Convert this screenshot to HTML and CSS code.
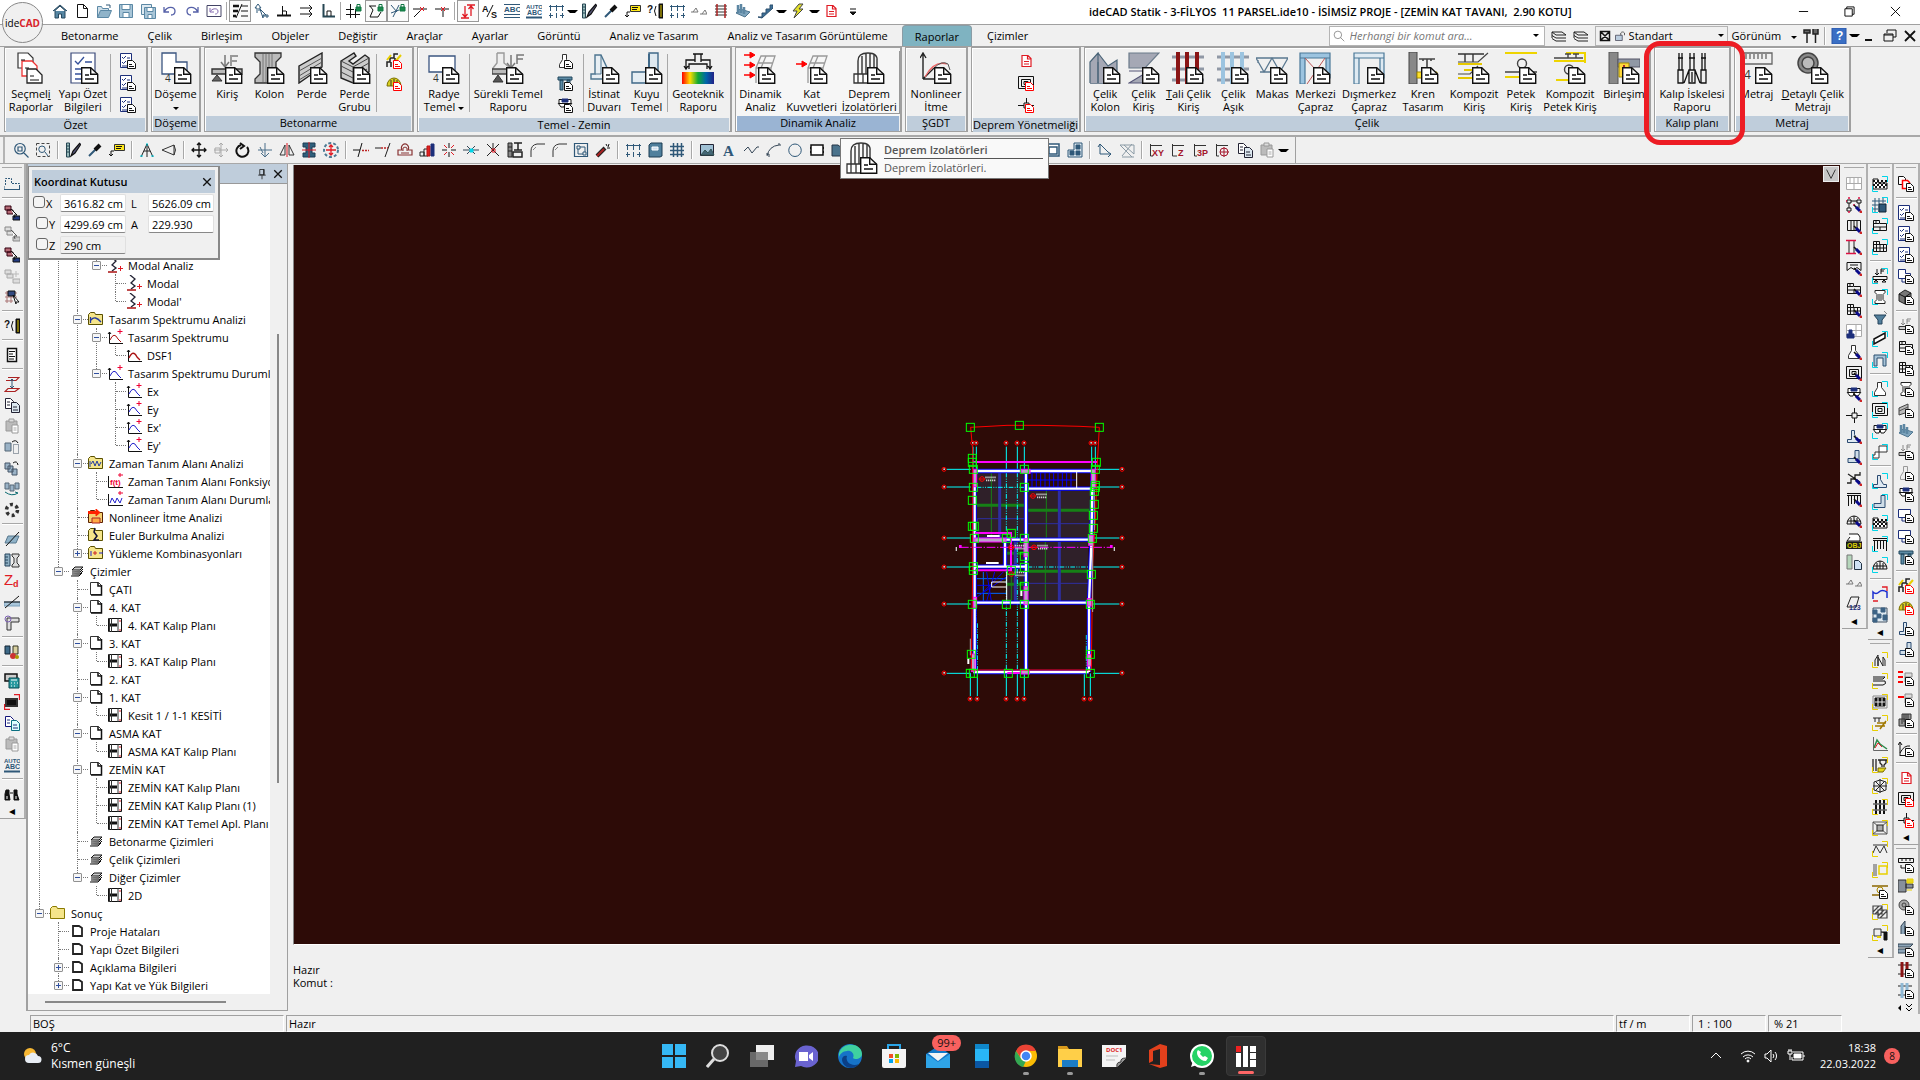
FILE: index.html
```
<!DOCTYPE html>
<html lang="tr">
<head>
  <meta charset="UTF-8">
  <title>ideCAD Statik</title>
  <link rel="stylesheet" href="styles.css">
</head>
<body>

  <header class="titlebar">
    <div class="quick" data-tools="home new open save saveall undo redo undobox | list* cursor perp arrows corner | gridlock polylock* xlock* node node2 | redit* as abc autoabc dim v brush pip note qruler dim level rebar bldg stairs v bolt v rdoc1 ovf"></div>
    <h1>ideCAD Statik - 3-FİLYOS&nbsp; 11 PARSEL.ide10 - İSİMSİZ PROJE - [ZEMİN KAT TAVANI,&nbsp; 2.90 KOTU]</h1>
    <div class="window-buttons">
      <button aria-label="Simge durumu"><svg viewBox="0 0 12 12"><path d="M1 6h10"/></svg></button>
      <button aria-label="Önceki boyut"><svg viewBox="0 0 12 12"><path d="M1 3h8v8H1zM3 3V1h8v8H9"/></svg></button>
      <button aria-label="Kapat"><svg viewBox="0 0 12 12"><path d="m1 1 10 10M11 1 1 11"/></svg></button>
    </div>
  </header>

  <nav class="menubar">
    <button class="logo">ide<b>CAD</b></button>
    <div class="tabs">
      <button>Betonarme</button>
      <button>Çelik</button>
      <button>Birleşim</button>
      <button>Objeler</button>
      <button>Değiştir</button>
      <button>Araçlar</button>
      <button>Ayarlar</button>
      <button>Görüntü</button>
      <button>Analiz ve Tasarım</button>
      <button>Analiz ve Tasarım Görüntüleme</button>
      <button class="active">Raporlar</button>
      <button>Çizimler</button>
    </div>
    <label class="search">
      <svg data-icon="search"></svg>
      <input type="text" placeholder="Herhangi bir komut ara..." aria-label="Komut ara">
      <span class="caret"></span>
    </label>
    <div class="menu-tools" data-tools="layers layers"></div>
    <div class="style-pick">
      <svg data-icon="xbox"></svg><svg data-icon="lock"></svg>
      <select aria-label="Stil"><option>Standart</option></select>
      <span class="caret"></span>
    </div>
    <button class="view">Görünüm <span class="caret"></span></button>
    <div class="menu-tools end" data-tools="hammer | help v min rest close"></div>
  </nav>

  <section class="ribbon">
    <div class="group g-ozet">
      <div class="items">
        <button><svg data-big="select"></svg>Seçmel<u>i</u><br>Raporlar</button>
        <button><svg data-big="check+doc"></svg>Yapı Özet<br>Bilgileri</button>
        <div class="stack line" data-tools="chk+doc chk+doc chk+doc"></div>
      </div>
      <h2>Özet</h2>
    </div>
    <div class="group g-doseme">
      <div class="items">
        <button><svg data-big="slab+doc"></svg>Döşeme<br><span class="caret"></span></button>
      </div>
      <h2>Döşeme</h2>
    </div>
    <div class="group g-beton">
      <div class="items">
        <button><svg data-big="beam+doc"></svg>Kiriş</button>
        <button><svg data-big="column+doc"></svg>Kolon</button>
        <button><svg data-big="wall+doc"></svg>Perde</button>
        <button><svg data-big="walls+doc"></svg>Perde<br>Grubu</button>
        <div class="stack line" data-tools="stair2+rdoc dome+rdoc"></div>
      </div>
      <h2>Betonarme</h2>
    </div>
    <div class="group g-temel">
      <div class="items">
        <button><svg data-big="raft+doc"></svg>Radye<br>Temel <span class="caret"></span></button>
        <button class="line"><svg data-big="strip+doc"></svg>Sürekli Temel<br>Raporu</button>
        <div class="stack" data-tools="foot+doc pile+doc cap+doc"></div>
        <button class="line"><svg data-big="retain+doc"></svg>İstinat<br>Duvarı</button>
        <button><svg data-big="well+doc"></svg>Kuyu<br>Temel</button>
        <button class="line"><svg data-big="geo"></svg>Geoteknik<br>Raporu</button>
      </div>
      <h2>Temel - Zemin</h2>
    </div>
    <div class="group g-dinamik hot">
      <div class="items">
        <button><svg data-big="dyn+doc"></svg>Dinamik<br>Analiz</button>
        <button><svg data-big="floor+doc"></svg>Kat<br>Kuvvetleri</button>
        <button class="hover"><svg data-big="iso+doc"></svg>Deprem<br>İzolatörleri</button>
      </div>
      <h2>Dinamik Analiz</h2>
    </div>
    <div class="group g-sgdt">
      <div class="items">
        <button><svg data-big="push+doc"></svg>Nonlineer<br>İtme</button>
      </div>
      <h2>ŞGDT</h2>
    </div>
    <div class="group g-deprem">
      <div class="items">
        <div class="stack" data-tools="rdoc1 target+rdoc cross+rdoc"></div>
      </div>
      <h2>Deprem Yönetmeliği</h2>
    </div>
    <div class="group g-celik">
      <div class="items">
        <button><svg data-big="scol+doc"></svg>Çelik<br>Kolon</button>
        <button><svg data-big="sbeam+doc"></svg>Çelik<br>Kiriş</button>
        <button><svg data-big="tali+doc"></svg><u>T</u>ali Çelik<br>Kiriş</button>
        <button><svg data-big="asik+doc"></svg>Çelik<br>Aşık</button>
        <button><svg data-big="truss+doc"></svg>Makas</button>
        <button><svg data-big="brace+doc"></svg>Merkezi<br>Çapraz</button>
        <button><svg data-big="ebrace+doc"></svg>Dışmerkez<br>Çapraz</button>
        <button><svg data-big="crane+doc"></svg>Kren<br>Tasarım</button>
        <button><svg data-big="comp+doc"></svg>Kompozit<br>Kiriş</button>
        <button><svg data-big="comb+doc"></svg>Petek<br>Kiriş</button>
        <button><svg data-big="ccomb+doc"></svg>Kompozit<br>Petek Kiriş</button>
        <button><svg data-big="joint+doc"></svg>Birleşim</button>
      </div>
      <h2>Çelik</h2>
    </div>
    <div class="group g-kalip">
      <div class="items">
        <button><svg data-big="props"></svg>Kalıp İskelesi<br>Raporu</button>
      </div>
      <h2>Kalıp planı</h2>
      <div class="highlight"></div>
    </div>
    <div class="group g-metraj">
      <div class="items">
        <button><svg data-big="meter+doc"></svg>Metraj</button>
        <button><svg data-big="nut+doc"></svg><u>D</u>etaylı Çelik<br>Metrajı</button>
      </div>
      <h2>Metraj</h2>
    </div>
  </section>

  <div class="toolrow">
    <div class="tools" data-tools="zoom marquee | brush pip note | compass eye | move moveg rotate mirrorv mirror colred snowred | trim extend offset bars explode xcyan xstar fillet2 fillet fillet frame spray | dim book grid | pic ta poly arc circle cloud pgon pgon frame grid | win grid pic | frame win win win2 | axis hatch | xy zz p3 cir copy paste v"></div>
    <div class="tooltip">
      <svg data-big="iso+doc"></svg>
      <div>
        <strong>Deprem Izolatörleri</strong>
        <p>Deprem İzolatörleri.</p>
      </div>
    </div>
  </div>

  <main>
    <div class="side left" data-tools="lshape | sel1 sel2 sel1 selg sel3 | qruler | doct | hred copy paste dupe dupe2 dupe3 ring | slabc cols zd cutl corn | balls | calc redbox copyb paste autoabc | binoc <"></div>

    <aside class="panel">
      <div class="panel-head">
        <button aria-label="Sabitle"><svg data-icon="pin"></svg></button>
        <button aria-label="Kapat"><svg data-icon="close"></svg></button>
      </div>
      <div class="panel-body">
        <div class="tree" id="tree"></div>
        <div class="vbar"><span></span></div>
        <div class="hbar"><span></span></div>
      </div>

      <form class="coords">
        <div class="coords-head">Koordinat Kutusu <button type="button" aria-label="Kapat"><svg data-icon="close"></svg></button></div>
        <div class="coords-grid">
          <label><input type="checkbox">X</label><input type="text" value="3616.82 cm" aria-label="X"><label for="len">L</label><input type="text" id="len" value="5626.09 cm">
          <label><input type="checkbox">Y</label><input type="text" value="4299.69 cm" aria-label="Y"><label for="ang">A</label><input type="text" id="ang" value="229.930">
          <label><input type="checkbox">Z</label><input type="text" class="off" value="290 cm" aria-label="Z">
        </div>
      </form>
    </aside>

    <div class="work">
      <div class="canvas">
        <button class="canvas-menu" aria-label="Görünüm menüsü"><svg viewBox="0 0 16 16"><path d="m3 3 5 10 5-10"/></svg></button>
        <svg class="plan" id="plan" viewBox="0 0 690 900"></svg>
      </div>
      <div class="console">Hazır<br>Komut :</div>
    </div>

    <div class="side a" data-tools="gridw nodes+br fr+br cold+br span+br brick+br tile+br gridb foot+br target+br cap+br cross ret+br ell+br zig+br comb+br dome2+br obj wallp level para <"></div>
    <div class="side b">
      <div class="block" data-tools="chess+cb gridc+cb brick+cb tile+cb | beams+cb isec+cb cone plank+cb pile2+cb | foot+cb target+cb cap+cb step+cb | ret+cb ell+cb chess+cb comb+cb dome2+cb | curve chessb <"></div>
      <div class="block" data-tools="peaks+yb rail+yb winb+yb comps+yb spec ibeam+yb web+yb bars3+yb gusset+yb zigz+yb ysq+yb hole+doc hatch2+yb gun+yb <"></div>
    </div>
    <div class="side c">
      <div class="block" data-tools="rcopy | chk+doc chk+doc chk+doc slabs+doc cube+doc | beamg+doc brick+doc tile+doc isec+doc wallg+doc bldg beamg+doc footg+doc cap+doc rafts+doc rafts+doc pile+doc | stair2+rdoc dome+rdoc ret+doc ell+doc | dyns+doc flr+doc isos+doc | axes+doc | rdoc1 target+rdoc cross+rdoc <"></div>
      <div class="block last" data-tools="rule+doc joint2 nuts+doc peakb+doc sbm+doc redbars+doc blubars+doc"></div>
      <button class="more" aria-label="Daha fazla"><svg viewBox="0 0 20 12"><path d="M5 3v6L2 6z" fill="#000"/><path d="m10 2 3 3 3-3M10 6l3 3 3-3" fill="none" stroke="#000"/></svg></button>
    </div>
  </main>

  <footer class="status">
    <span class="s-floor">BOŞ</span>
    <span class="s-msg">Hazır</span>
    <span>tf / m</span>
    <span class="pad">1 : 100</span>
    <span class="pad">% 21</span>
  </footer>

  <footer class="taskbar">
    <div class="weather">
      <svg viewBox="0 0 24 24"><circle cx="10" cy="10" r="6" fill="#f7b733"/><path d="M9 19a4 4 0 0 1 0-8 5 5 0 0 1 9 1 3.500 3.500 0 0 1 0 7z" fill="#e8edf4"/></svg>
      <p>6°C<br>Kısmen güneşli</p>
    </div>
    <div class="apps" id="apps"></div>
    <div class="tray">
      <svg viewBox="0 0 20 20"><path d="m5 12 5-5 5 5"/></svg>
      <svg viewBox="0 0 20 20"><path d="M3 8a10 10 0 0 1 14 0M5 11a7 7 0 0 1 10 0M7 13a4 4 0 0 1 6 0" /><circle cx="10" cy="15" r="1" fill="#fff"/></svg>
      <svg viewBox="0 0 20 20"><path d="M3 8h2l4-4v12l-4-4H3zM11 8a3 3 0 0 1 0 4M13 6a6 6 0 0 1 0 8"/></svg>
      <svg viewBox="0 0 20 20"><path d="M7 6h10v8H6v-3M18 9v2M2 5h4v3H2zM3 3v2M5 3v2M4 8v6"/><path d="M8 8h7v4H8z" fill="#fff"/></svg>
      <time>18:38<br>22.03.2022</time>
      <span class="count">8</span>
    </div>
  </footer>

  <script src="app.js"></script>
</body>
</html>
```
FILE: styles.css
```
* {
  box-sizing: border-box;
}
body {
  margin: 0;
  height: 100vh;
  display: flex;
  flex-direction: column;
  overflow: hidden;
  font-family: "Open Sans", "Noto Sans", sans-serif;
  font-size: 10px;
  color: #000;
  background: #f0f0f0;
}
button {
  border: 0;
  padding: 0;
  background: none;
  font: inherit;
  color: inherit;
}
svg {
  display: block;
  flex: none;
}
h1, h2, p {
  margin: 0;
}
.caret {
  display: inline-block;
  border: 3px solid transparent;
  border-top-color: #000;
  border-bottom: 0;
  vertical-align: middle;
}

/* toolbars */
.tool {
  width: 22px;
  height: 22px;
  display: grid;
  place-items: center;
  flex: none;
}
.tool svg {
  width: 16px;
  height: 16px;
}
.tool.boxed {
  border: 1px solid #999;
  background: #fafafa;
}
.drop {
  width: 11px;
  text-align: center;
  flex: none;
}
.drop .caret {
  display: block;
  margin: 0 auto;
}
.sep {
  width: 2px;
  height: 18px;
  margin: 0 3px;
  background: #a8a8a8;
  border-right: 1px solid #fff;
  flex: none;
}

/* title */
.titlebar {
  height: 25px;
  flex: none;
  display: flex;
  align-items: center;
  background: #fff;
  border-bottom: 1px solid #a0a0a0;
  padding: 0 2px 2px 49px;
}
.quick, .menu-tools, .tools {
  display: flex;
  align-items: center;
}
.quick .sep {
  margin: 0 1px;
}
.titlebar h1 {
  flex: 1;
  margin-left: 225px;
  font-size: 11px;
  font-weight: 600;
  white-space: nowrap;
}
.window-buttons {
  display: flex;
}
.window-buttons button {
  width: 46px;
  display: grid;
  place-items: center;
}
.window-buttons svg {
  width: 11px;
  height: 11px;
  fill: none;
  stroke: #000;
}

/* menu */
.menubar {
  height: 21px;
  flex: none;
  display: flex;
  align-items: center;
  position: relative;
  padding-left: 46px;
}
.logo {
  position: absolute;
  left: 2px;
  top: -23px;
  width: 41px;
  height: 41px;
  border: 1px solid #888;
  border-radius: 50%;
  background: #f0f0f0;
  font-size: 10px;
  z-index: 2;
}
.logo b {
  color: #d8232a;
}
.tabs {
  display: flex;
  height: 100%;
  flex: 1;
}
.tabs button {
  padding: 0 14px 0 15px;
  font-size: 11px;
  white-space: nowrap;
}
.tabs .active {
  background: #7fb3c1;
  border: 1px solid #8a9ca5;
  border-bottom: 0;
  border-radius: 4px 4px 0 0;
  padding: 0 12px;
}
.search {
  display: flex;
  align-items: center;
  width: 216px;
  height: 20px;
  padding: 0 5px 0 3px;
  background: #fff;
  border: 1px solid #b4b4b4;
}
.search svg, .style-pick svg {
  width: 12px;
  height: 12px;
  margin-right: 3px;
}
.search input {
  flex: 1;
  border: 0;
  outline: 0;
  font: italic 11px "Open Sans", sans-serif;
}
.search input::placeholder {
  color: #777;
}
.menu-tools {
  padding: 0 3px;
}
.style-pick {
  display: flex;
  align-items: center;
  width: 133px;
  height: 20px;
  padding: 0 3px;
  border: 1px solid #b4b4b4;
}
.style-pick select {
  flex: 1;
  appearance: none;
  border: 0;
  background: none;
  font: 11px "Open Sans", sans-serif;
}
.view {
  font-size: 11px;
  padding: 0 4px;
}
.view .caret {
  margin-left: 7px;
}
.menu-tools.end {
  padding: 0;
}
.menu-tools.end .tool {
  width: 20px;
}

/* ribbon */
.ribbon {
  display: flex;
  flex: none;
  height: 91px;
  gap: 3px;
  padding: 0 0 3px 4px;
  border-top: 1px solid #a0a0a0;
  border-bottom: 2px solid #a8a8a8;
}
.group {
  display: flex;
  flex-direction: column;
  position: relative;
  flex: none;
  border: 1px solid #a0a0a0;
  border-right-width: 2px;
  box-shadow: inset 1px 1px #fff;
}
.group h2 {
  height: 15px;
  margin: 0 1px;
  background: #bfcddb;
  font-size: 11px;
  line-height: 14px;
  font-weight: normal;
  text-align: center;
  white-space: nowrap;
}
.group.hot h2 {
  background: #9ab4d3;
}
.group.hot .items {
  background: #f6f6f6;
}
.items {
  flex: 1;
  display: flex;
  padding: 2px 1px;
}
.items > button {
  flex: 1 1 auto;
  display: block;
  padding-top: 2px;
  font-size: 11px;
  line-height: 13px;
  text-align: center;
  white-space: nowrap;
  align-self: flex-start;
}
.items > button svg {
  width: 32px;
  height: 32px;
  margin: 0 auto 3px;
}
.items > .hover {
  box-shadow: 1px 1px #999;
}
.line {
  position: relative;
}
.line::before {
  content: "";
  position: absolute;
  left: 0;
  top: 4px;
  height: 58px;
  border-left: 1px solid #a8a8a8;
}
.stack {
  display: flex;
  flex-direction: column;
  align-items: center;
  width: 35px;
  flex: none;
}
.g-deprem .stack {
  flex: 1;
}
.g-ozet { width: 144px; }
.g-doseme { width: 50px; }
.g-beton { width: 210px; }
.g-temel { width: 315px; }
.g-dinamik { width: 167px; }
.g-sgdt { width: 63px; }
.g-deprem { width: 110px; }
.g-celik { width: 567px; }
.g-kalip { width: 77px; }
.g-metraj { width: 117px; }
.highlight {
  position: absolute;
  left: -11px;
  top: -7px;
  width: 101px;
  height: 104px;
  border: 5px solid #ed1c24;
  border-radius: 16px;
  z-index: 3;
}

/* second toolbar */
.toolrow {
  height: 27px;
  flex: none;
  position: relative;
  border-bottom: 1px solid #a8a8a8;
}
.tools {
  display: inline-flex;
  height: 26px;
  margin-left: 3px;
  padding: 0 6px 0 5px;
  border-left: 2px solid #b4b4b4;
  border-right: 1px solid #a0a0a0;
}
.tooltip {
  position: absolute;
  left: 840px;
  top: 1px;
  width: 209px;
  height: 41px;
  display: flex;
  gap: 6px;
  padding: 3px 5px;
  background: #f9f9f9;
  border: 1px solid #777;
  z-index: 5;
  font-size: 11px;
  line-height: 15px;
  color: #555;
}
.tooltip svg {
  width: 32px;
  height: 32px;
}
.tooltip div {
  flex: 1;
}
.tooltip strong {
  display: block;
  height: 17px;
  font-weight: 600;
  border-bottom: 1px solid #555;
}
.tooltip p {
  padding-top: 1px;
}

/* main area */
main {
  flex: 1;
  display: flex;
  min-height: 0;
}
.side {
  width: 26px;
  flex: none;
  align-self: flex-start;
}
.side.left, .side.a, .block {
  display: flex;
  flex-direction: column;
  align-items: center;
  padding-top: 9px;
  border-right: 2px solid #b0b0b0;
  border-bottom: 1px solid #a0a0a0;
  background: linear-gradient(#a8a8a8, #a8a8a8) center 3px / 20px 1px no-repeat;
}
.side .tool {
  height: 21px;
}
.side .sep {
  width: 21px;
  height: 2px;
  margin: 3px 0;
  border-right: 0;
  border-bottom: 1px solid #fff;
}
.side .drop {
  height: 14px;
  line-height: 12px;
  font-size: 12px;
}
.side.c {
  align-self: stretch;
  display: flex;
  flex-direction: column;
}
.block.last {
  border-bottom: 0;
  flex: 1;
}
.more {
  height: 18px;
  padding-left: 2px;
  border-right: 2px solid #b0b0b0;
}
.more svg {
  width: 20px;
  height: 12px;
}

/* project tree */
.panel {
  position: relative;
  width: 262px;
  flex: none;
  display: flex;
  flex-direction: column;
  border: 1px solid #a0a0a0;
  border-width: 0 1px 1px 2px;
  margin-bottom: 3px;
}
.panel-head {
  display: flex;
  justify-content: flex-end;
  align-items: center;
  gap: 4px;
  height: 20px;
  padding-right: 3px;
  background: #bfcddb;
  border-bottom: 1px solid #999;
}
.panel-head svg, .coords-head svg {
  width: 12px;
  height: 12px;
}
.panel-body {
  flex: 1;
  min-height: 0;
  display: grid;
  grid-template: minmax(0, 1fr) 16px / minmax(0, 1fr) 17px;
}
.tree {
  overflow: hidden;
  background: #fff;
  font-size: 11px;
}
.tree ul {
  list-style: none;
  margin: 0;
  padding: 0 0 0 19px;
}
.tree > ul {
  padding: 72px 0 0 2px;
}
.tree li {
  position: relative;
}
.tree li::before {
  content: "";
  position: absolute;
  left: 9px;
  top: 0;
  bottom: 0;
  border-left: 1px dotted #777;
}
.tree li:last-child::before {
  bottom: auto;
  height: 9px;
}
.row {
  position: relative;
  display: flex;
  align-items: center;
  height: 18px;
  padding-left: 20px;
  gap: 5px;
  white-space: nowrap;
}
.row::before {
  content: "";
  position: absolute;
  left: 10px;
  top: 9px;
  width: 10px;
  border-top: 1px dotted #777;
}
.row svg {
  width: 16px;
  height: 16px;
}
.twist {
  position: absolute;
  left: 5px;
  top: 5px;
  width: 9px;
  height: 9px;
  border: 1px solid #919191;
  border-radius: 1px;
  background: linear-gradient(#2f4f9f, #2f4f9f) center / 5px 1px no-repeat #f6f6f6;
}
.twist.plus {
  background: linear-gradient(#2f4f9f, #2f4f9f) center / 5px 1px no-repeat, linear-gradient(#2f4f9f, #2f4f9f) center / 1px 5px no-repeat #f6f6f6;
}
.vbar span {
  display: block;
  width: 2px;
  height: 449px;
  margin: 150px 0 0 7px;
  background: #888;
}
.hbar span {
  display: block;
  width: 181px;
  height: 2px;
  margin: 7px 0 0 17px;
  background: #888;
}

/* coordinate box */
.coords {
  position: absolute;
  left: 0;
  top: 2px;
  width: 192px;
  height: 94px;
  padding: 3px;
  background: #f0f0f0;
  border: 1px solid #888;
  border-width: 1px 2px 2px 1px;
  z-index: 2;
}
.coords-head {
  display: flex;
  justify-content: space-between;
  align-items: center;
  height: 23px;
  padding: 0 2px;
  background: #bfcddb;
  font-size: 11px;
  font-weight: 600;
}
.coords-grid {
  display: grid;
  grid-template-columns: 25px 66px 18px 66px;
  gap: 3px 2px;
  padding: 1px 0 0 1px;
  align-items: center;
  font-size: 11px;
}
.coords-grid label {
  display: flex;
  align-items: center;
}
.coords-grid input[type="text"] {
  width: 100%;
  height: 18px;
  padding: 0 0 0 3px;
  border: 1px solid #e0e0e0;
  border-bottom-color: #888;
  border-radius: 2px;
  font: 11px "Open Sans", sans-serif;
}
.coords-grid .off {
  background: #f0f0f0;
}
.coords-grid input[type="checkbox"] {
  appearance: none;
  width: 12px;
  height: 12px;
  margin: 0 1px 3px 0;
  border: 1px solid #666;
  border-radius: 3px;
  background: #f4f4f4;
}
.coords-grid input + label {
  padding-left: 3px;
}

/* drawing area */
.work {
  flex: 1;
  min-width: 0;
  display: flex;
  flex-direction: column;
  padding: 0 2px 0 5px;
}
.canvas {
  flex: 1;
  position: relative;
  margin-top: 1px;
  background: #2d0b07;
  border-left: 1px solid #888;
  border-bottom: 1px solid #fff;
}
.canvas-menu {
  position: absolute;
  right: 1px;
  top: 1px;
  width: 16px;
  height: 16px;
  background: #c8c8c8;
  border: 1px solid #eee;
}
.canvas-menu svg {
  width: 14px;
  height: 14px;
  fill: none;
  stroke: #222;
}
.plan {
  position: absolute;
  left: 626px;
  top: 245px;
  width: 230px;
  height: 300px;
}
.console {
  height: 69px;
  padding-top: 18px;
  font-size: 11px;
  line-height: 13px;
}

/* status */
.status {
  display: flex;
  gap: 2px;
  height: 18px;
  flex: none;
  padding: 1px 78px 0 30px;
  font-size: 11px;
  line-height: 15px;
}
.status span {
  width: 74px;
  border: 1px solid #a0a0a0;
  border-right-color: #fff;
  border-bottom-color: #fff;
  padding-left: 2px;
}
.status .s-floor {
  width: 254px;
}
.status .s-msg {
  flex: 1;
}
.status .pad {
  padding-left: 5px;
}

/* windows taskbar */
.taskbar {
  display: grid;
  grid-template-columns: 1fr auto 1fr;
  align-items: center;
  height: 48px;
  flex: none;
  background: #202020;
  color: #fff;
  font-size: 12px;
  line-height: 16px;
}
.weather {
  display: flex;
  align-items: center;
  gap: 7px;
  padding-left: 20px;
}
.weather svg {
  width: 24px;
  height: 24px;
}
.tray time {
  font-size: 11px;
}
.apps {
  display: flex;
  gap: 4px;
}
.app {
  position: relative;
  width: 40px;
  height: 40px;
  display: grid;
  place-items: center;
  border-radius: 4px;
}
.app svg {
  width: 24px;
  height: 24px;
}
.app.open::after {
  content: "";
  position: absolute;
  left: 17px;
  bottom: 1px;
  width: 6px;
  height: 3px;
  border-radius: 2px;
  background: #999;
}
.app.current {
  background: #2f2f2f;
  border: 1px solid #3a3a3a;
}
.app.current::after {
  left: 11px;
  width: 16px;
  background: #f66;
}
.badge {
  position: absolute;
  right: -3px;
  top: -1px;
  padding: 0 5px;
  border-radius: 8px;
  background: #f8615f;
  color: #111;
  font-size: 11px;
  line-height: 16px;
}
.tray {
  display: flex;
  justify-content: flex-end;
  align-items: center;
  gap: 4px;
  padding-right: 20px;
}
.tray svg {
  width: 20px;
  height: 20px;
  fill: none;
  stroke: #fff;
}
.tray svg:first-child {
  margin-right: 8px;
}
.tray time {
  margin-left: 10px;
  text-align: right;
}
.tray .count {
  width: 16px;
  height: 16px;
  margin-left: 4px;
  border-radius: 50%;
  background: #f8615f;
  color: #111;
  font-size: 10px;
  line-height: 16px;
  text-align: center;
}
```
FILE: app.js
```
const p = (d, s = "#111", f = "none", w = 1) => `<path d="${d}" stroke="${s}" fill="${f}" stroke-width="${w}"/>`;
const t = (x, y, size, text, fill = "#111") => `<text x="${x}" y="${y}" font-size="${size}" font-weight="bold" font-family="Liberation Sans" fill="${fill}">${text}</text>`;

const navy = "#1c2f7a", steel = "#2f5878", gray = "#888", red = "#e01b24", cyan = "#00d5e8", gold = "#e8cf00";

// 16px icons, joined with + to lay one over the other
const small = {
  doc: p("M7.500 7.500h5l3 3v5h-8z", "#111", "#fff") + p("M9 11.500h3M9 13.500h5"),
  rdoc: p("M7.500 7.500h5l3 3v5h-8z", "#f00", "#fff") + p("M9 11.500h3M9 13.500h5", "#f00"),
  br: p("M8 8l3 3", "#111", "none", 1.500) + p("M10 10l4 4", "#0a0a8a", "none", 3) + p("M14 14l2 2", "#c22", "none", 2.500),
  cb: p("M10 .500h5.500V6M.500 10v5.500H6", cyan),
  yb: p("M10 .500h5.500V6M.500 10v5.500H6", gold),
  home: p("M1 8l7-6 7 6M3 7.500V15h3.500v-4h3v4H13V7.500L8 3z", "#27485f", "#5686a3"),
  new: p("M3.500 1.500h6l4 4v9h-10zM9.500 1.500v4h4", "#111", "#fff"),
  open: p("M1.500 14.500v-11h4l1 2h6v2", "#5b88a5", "#cfdfe9") + p("M1.500 14.500l3-7h11l-3 7z", "#5b88a5", "#8fb3c9") + p("M10 2h4v3", steel),
  save: p("M1.500 1.500h13v13h-13z", "#5b88a5", "#a9c6d8") + p("M4 1.500h8v5H4zM5 9.500h6v5H5z", "#5b88a5", "#fff"),
  saveall: p("M1.500 1.500h10v10h-10z", "#5b88a5", "#dfeaf1") + p("M4.500 4.500h11v11h-11z", "#5b88a5", "#a9c6d8") + p("M7 4.500h6v4H7zM8 11.500h4v4H8z", "#5b88a5", "#fff"),
  undo: p("M2 4v5h5M2.500 8.500C5 3 13 3 13 8c0 3-2 4-4 4", "#5560a8", "none", 1.300),
  redo: p("M14 4v5H9M13.500 8.500C11 3 3 3 3 8c0 3 2 4 4 4", "#5560a8", "none", 1.300),
  undobox: p("M1 2.500h14v11H1z", "#446", "#fff") + p("M4 5v4h4M4.500 8.500C6 5 12 5 12 8s-2 3-3 3", "#846ab0"),
  list: p("M1 3h6M1 8h5M1 13h3", "#111", "none", 2.500) + p("M9 3h7M9 8h7M9 13h7M4 15L10 1"),
  cursor: p("M4 1l-3 4h2v5M4 1l3 4H5v3M6 6l6 6-3 0 0 3z", steel) + p("M9 13h6M13 11v4", steel),
  perp: p("M1 12.500h14", "#111", "none", 2) + p("M6.500 3v9M10.500 8v4M6 8h4"),
  arrows: p("M2 5h12M2 11h12M11 2l3 3-3 3M11 8l3 3-3 3"),
  corner: p("M3.500 1v12.500H15", "#264653", "none", 2) + p("M7 13V8h4v5"),
  gridlock: p("M4.500 1v14M9.500 6v9M0 6.500h8M0 11.500h14") + p("M10 4h5v4h-5z", "#174", "#1a8a4a") + p("M11 4V1.500h3V4", "#174"),
  polylock: p("M1 3h7M2 3l3 4-3 7h8l3-5", "#111") + p("M10 4h5v4h-5z", "#174", "#1a8a4a") + p("M11 4V1.500h3V4", "#174"),
  xlock: p("M1 2l6 7M3 14l6-12M1 10l8-3", steel) + p("M10 4h5v4h-5z", "#174", "#1a8a4a") + p("M11 4V1.500h3V4", "#174"),
  node: p("M1 6h14M10 6L2 14") + p("M8 4l4 4M12 4L8 8", red),
  node2: p("M1 6h14M9 6v8") + p("M7 4l4 4M11 4L7 8", red),
  redit: p("M5 14V3M2.500 11L5 14l2.500-3M1 15h8M11 13V3M8.500 6l2.500-3 2.500 3M7 2h8", red, "none", 1.300),
  as: t(0, 9, 9, "A") + t(9, 15, 9, "S") + p("M11 2L5 14"),
  abc: t(0, 9, 8, "ABC", steel) + p("M0 11.500h16M0 14.500h16M0 1.500h16", steel),
  autoabc: t(0, 6, 6, "AUTO", steel) + t(1, 12, 7, "ABC", steel) + p("M0 14.500h16", steel, "none", 2),
  dim: p("M2.500 2v6M8.500 2v6M14.500 2v6M1 3.500h15M2.500 10v5M14.500 10v5M1 12.500h4M12 12.500h4M8.500 10v5", steel),
  brush: p("M1.500 1v14h3V1zM2 4h2M2 7h2M2 10h2", "#264653", "#9bb") + p("M15 1L8 9l-2 5 4-3 6-9", "#111", "#557", 1.200),
  pip: p("M2 14l7-7", steel, "none", 2) + p("M8 8l5-5", "#111", "none", 4),
  note: p("M5.500 2.500h10v6h-10z", "#333", "#ffe81a") + p("M7 4.500h6M7 6.500h5M5 9H2v5M0 12l2 2 2-2"),
  qruler: t(0, 10, 10, "?") + p("M9 3q-3 5 0 10", "#111") + p("M12 1h4v14h-4z", "#111", "#111") + p("M14 2v12", gold, "none", 1),
  level: p("M0 9h7l-2-4-3 4M9 11h7l-2-4-3 4", "#777"),
  rebar: p("M2 3h12M2 6h12M2 9h12M2 12h12", "#333", "none", 1) + p("M4 1v12M12 1v14", "#a22", "none", 1.500),
  bldg: p("M1 10l4-4 10 3-5 5z", "#4d7590", "#7ea4bd") + p("M3 2v8M6 1v9M9 4v7", "#5d87a3", "none", 2.500),
  stairs: p("M1 14h4v-4h4V6h4V2h3v3l-11 10z", "#2b4f6e", "#3f7097"),
  bolt: p("M9 1L3 8h4l-3 7 9-9H9l4-5z", "#444", "#e3e02c"),
  rdoc1: p("M4 2.500h6l3 3v8H4zM9.500 2.500v3.500H13", red, "#fff", 1.200) + p("M6 8.500h5M6 11h5", red),
  ovf: p("M5 6h6") + p("M5 9h6l-3 3z", "#111", "#111"),
  search: p("M6.500 1.500a5 5 0 1 1 0 10 5 5 0 0 1 0-10M10 10l5 5", "#777"),
  layers: p("M1 4h10l4 3H5zM1 7.500L5 10h10M1 10.500L5 13h10M1 4v6", "#222"),
  xbox: p("M2 2h12v12H2zM3 3l10 10M13 3L3 13", "#111", "none", 2),
  lock: p("M2 7h9v7H2z", "#445", "#bcd") + p("M9 7V4a3 3 0 0 1 5 0v3", "#333"),
  hammer: p("M1 2h6v3H1zM4 5v10M10 1v5h5V1M12.500 6v9", "#222", "#666", 1.500),
  help: p("M1 0h14v16H1z", "#2a57a8", "#3a6fc4") + t(5, 12, 12, "?", "#fff"),
  min: p("M3 12h7", "#111", "none", 2),
  rest: p("M5 5V2h9v7h-3M2 6h9v7H2zM2 7h9"),
  close: p("M3 3l10 10M13 3L3 13", "#111", "none", 1.800),
  pin: p("M5 2h6v7H5zM3 9.500h10M8 10v5M10 2v7"),
  chk: p("M.500 .500h11v14H.500z", navy, "#fff") + p("M2 4l1.500 1.500L6 3M2 9l1.500 1.500L6 8M7 5h3M7 9h3M2 13h5", navy),
  stair2: p("M1 14V9h3V5h4V1h4M5 14V9M9 9V5", "#222", "none", 1.500) + p("M1 7l4-5M8 10l7-8", gold, "none", 2),
  dome: p("M1 11a7 8 0 0 1 14 0z", "#7a7000", "#d9cf20") + p("M5 11V5M8 11V4M11 11V5", "#333"),
  foot: p("M5.500 1.500h4v5l4 5v3h-11v-3l3-5z", "#333", "#fff"),
  footg: p("M5.500 1.500h4v5l4 5v3h-11v-3l3-5z", "#999", "#eee"),
  pile: p("M1 2h14v3H1zM3 5h3v10H3zM10 5h3v10h-3z", "#20465c", "#5d8ba5"),
  pile2: p("M2 14V3h12v11h-3V6H5v8z", "#2b4f6e", "#a8c4d8"),
  cap: p("M2 2.500h12v4H2zM1 6l3 4h3l1-3 1 3h3l3-4", "#111", "#fff") + p("M5 2h6v3H5z", navy, navy),
  target: p("M.500 1.500h15v12H.500zM3.500 4.500h9v7h-9zM6 6.500h4v3H6z", "#111"),
  cross: p("M0 8.500h16M8.500 1v15") + p("M6 6h5v5H6z", "#111", "#f0f0f0"),
  zoom: p("M7 1.500a5 5 0 1 1 0 10.500A5 5 0 0 1 7 1.500M10.500 10.500l5 5M5 5h4v4H5z", steel, "none", 1.200),
  marquee: `<path d="M1.500 1.500h13v13h-13z" fill="none" stroke="#444" stroke-dasharray="3 2"/>` + p("M7 4a3 3 0 1 1 0 6.500A3 3 0 0 1 7 4M10 10l3 4", steel),
  compass: p("M8 2L2 15M8 2l6 13M5 9h6M8 2v13", "#222") + p("M8 1v3M1 14h3M12 14h3", cyan),
  eye: p("M13 3L1 8l12 5V3M13 3q3 5 0 10", "#333"),
  move: p("M8 1v14M1 8h14M6 3l2-2 2 2M6 13l2 2 2-2M3 6L1 8l2 2M13 6l2 2-2 2", "#111", "none", 1.300),
  moveg: p("M8 1v14M1 8h14M6 3l2-2 2 2M6 13l2 2 2-2M13 6l2 2-2 2M2 6h5v5H2z", "#aaa"),
  rotate: p("M6 3a6 6 0 1 0 6 2M5 1l4 3-4 3", "#111", "none", 2),
  mirrorv: p("M8 1v14M4 11l4 4 4-4M1 8h14M3 5l3 6", "#4a6f8a"),
  mirror: p("M6 3v10H1zM10 3v10h5z", "#333") + p("M8 1v14", red),
  colred: p("M2 1h12v4h-3v6h3v4H2v-4h3V5H2z", "#1d3c52", "#2f5f7c") + p("M8 0v16M1 8h14", red),
  snowred: p("M8 3v10M3 8h10M6 5l2-2 2 2M6 11l2 2 2-2", red, "none", 1.300) + `<circle cx="8" cy="8" r="7" fill="none" stroke="#4d7a94" stroke-width="2" stroke-dasharray="3 2"/>`,
  trim: p("M9 1L5 15M0 8h7") + `<path d="M9 8.500h7" stroke="#b22" stroke-width="1.500" stroke-dasharray="2 1"/>`,
  extend: p("M15 1l-5 14M0 6h6", "#222") + `<path d="M6 6h7" stroke="#b22" stroke-width="1.500" stroke-dasharray="2 1"/>`,
  offset: p("M5 8a3.500 4 0 1 1 6 0h4v5H1V8z", "#833", "none", 1.200) + p("M4 11h8M6 9q-1-4 2-4t2 4", "#833"),
  bars: p("M1 14v-4h4v4zM5 14V7h4v7z", "#222", "#eee") + p("M8 14V4h3v10z", "#b11", "#d22") + p("M12 14V2h3v12z", navy, navy),
  explode: p("M8 1v5M8 10v5M1 8h5M10 8h5") + p("M3 3l3 3M13 3l-3 3M3 13l3-3M13 13l-3-3", red),
  xcyan: p("M0 8h16M4 4l3 3M12 4L9 7M4 12l3-3M12 12L9 9", "#345") + p("M7 7h3v3H7z", cyan, cyan),
  xstar: p("M2 2l12 12M14 2L2 14M8 1v6", "#222") + p("M7 7h3v3H7z", red),
  fillet2: p("M1 1h4v14H1zM1 5h4M1 9h4", "#222", "#888") + p("M7 1h8M7 8h8M11 1v7M6 10h9v5H6z", "#222", "none", 1.500),
  fillet: p("M2 15V9q0-6 6-7h8", "#333") + p("M4 8l3-3", gray),
  frame: p("M1.500 1.500h13v13h-13z", steel, "none", 1.200) + p("M4 4h3v3H4zM10 10h3v3h-3zM7 5h5v5M5 7v5h5", steel),
  spray: p("M2 14L10 6", "#222", "none", 4) + p("M2 14l7-7", "#a22", "none", 2) + p("M11 2l1 2M14 2l-1 3M15 6l-3 0"),
  book: p("M2 3l2-2h11v13l-2 1H2z", "#1d3c52", "#4f7f9c") + p("M5 5h6v3H5z", "#fff", "#cde"),
  grid: p("M4.500 1v14M8.500 1v14M12.500 1v14M1 4.500h14M1 8.500h14M1 12.500h14", steel, "none", 1.500),
  pic: p("M1.500 2.500h13v11h-13z", "#223", "#9fc0d4") + p("M2 13l4-5 3 3 3-4 3 6z", "#355", "#467"),
  ta: `<text x="2" y="14" font-size="15" font-weight="bold" font-family="Liberation Serif" fill="${steel}">A</text>`,
  poly: p("M1 9l4-4 4 6 5-6h2", "#345"),
  arc: p("M2 14Q4 4 14 3M1 12h3v3M13 2h2v2", "#345"),
  circle: p("M8 2a6 6 0 1 1 0 12.500A6 6 0 0 1 8 2", steel),
  cloud: p("M2 3h12v10H2z", "#111", "#fff", 1.500) + p("M1 6h1M1 10h1M14 6h1M14 10h1", "#111", "none", 2),
  pgon: p("M1 3h6l8 6-4 5H1z", "#234", "#4a728c"),
  win: p("M2 2h12v12H2zM4 5h8v7H4z", steel, "#fff", 1.500),
  win2: p("M7 1h8v14H1V8h6z", steel, "#dbe6ee") + p("M9 3h4v4H9zM3 9h4v4H3zM9 9h4v4H9z", steel, steel),
  axis: p("M3 12V2l-2 3M3 2l3 3M3 12h11l-3-2M14 12l-3 3M6 5l5 5", steel),
  hatch: p("M1 3h14v9M1 3l12 12M5 3l10 9M13 2L3 14M3 15h12", "#8a9aa5"),
  xy: p("M1.500 2v12H4M1 3.500h12", "#333") + t(3, 14, 9, "XY", "#a3142a"),
  zz: p("M1.500 2v12H6M1 3.500h12", "#333") + t(7, 14, 9, "Z", "#a3142a"),
  p3: p("M1.500 2v12H4M1 3.500h12", "#333") + t(4, 14, 9, "3P", "#a3142a"),
  cir: p("M1.500 2v12H4M1 3.500h12", "#333") + p("M9 6a4 4 0 1 1 0 8 4 4 0 0 1 0-8M9 5v10M5 10h9", "#a3142a"),
  copy: p("M1.500 1.500h5l3 3v7h-8z", "#223", "#fff") + p("M7.500 5.500h5l3 3v7h-8z", "#223", "#dce8f0") + p("M3 5h3M3 8h3M9 10h4M9 13h5", "#223"),
  copyb: p("M1.500 1.500h5l3 3v7h-8z", "#11137a", "#fff") + p("M7.500 5.500h5l3 3v7h-8z", "#0a6f80", "#dff") + p("M3 5h3M3 8h3M9 10h4M9 13h5", navy),
  rcopy: p("M.500 .500h5l2 2v6h-7z", "#111", "#fff") + p("M4.500 4.500h5l2 2v6h-7z", "#f00", "#fff", 1.500) + p("M8.500 7.500h4l3 3v5h-7z", "#111", "#fff") + p("M10 11.500h3M10 13.500h4"),
  paste: p("M2 3h11v10H2z", "#999", "#bbb") + p("M5 1h5v3H5z", "#999", "#ddd") + p("M8 7h6v8H8z", "#999", "#fff") + p("M9.500 10h3M9.500 12h3", "#aaa"),
  // side columns
  lshape: `<path d="M1.500 9V2.500h6v5h8v4" fill="none" stroke="${steel}" stroke-dasharray="2 1"/>` + p("M0 13.500h16M0 10v3M15.500 10v3", steel),
  sel1: p("M1 1h6v4H1zM3 5h6v4H3z", "#301", "#b56a75") + p("M9 11h7v4H9z", "#111", "#223a80") + p("M7 4l6 6-3 0 1 3", "#111", "#fff"),
  sel2: p("M1 1h6v4H1zM3 5h6v4H3z", "#888", "#ddd") + p("M9 11h7v4H9z", "#888", "#ccc") + p("M7 4l6 6-3 0 1 3", "#555", "#fff"),
  selg: p("M1 2h6v4H1zM3 6h6v4H3zM9 11h7v4H9z", "#aaa", "#ddd") + p("M12 3v6M9 6h6", "#bbb"),
  sel3: p("M1 4h12M1 8h12M1 12h8M3 2v12M7 6v8", "#a77") + p("M4 2h7v5H4z", "#111", "#334a80") + p("M9 6l6 7-3 0 0 2z", "#111", "#fff"),
  doct: p("M3.500 1.500h9v13h-9z", "#111", "#fff", 1.500) + p("M5 4.500h6M5 7h4M5 9.500h6M5 12h5"),
  hred: p("M4 1.500h11l-3 3H2M4 12.500h11l-4 3H1z", "#a22", "none", 1.200) + p("M8 3v9M6 5l2-2 2 2M6 10l2 2 2-2", steel),
  dupe: p("M1 4h6v8H1z", "#567", "#9ab2c6") + `<path d="M9.500 5.500h5v9h-5z" fill="none" stroke="#456" stroke-dasharray="1 1"/>` + p("M8 3q4-3 6 1"),
  dupe2: p("M1 3h5v6H1zM4 6h5v6H4zM8 9h5v6H8z", "#456", "#9ab2c6") + p("M9 3q4-3 5 2"),
  dupe3: p("M1 2h4v6H1zM6 4h4v6H6zM11 2h4v6h-4z", "#567", "#9ab2c6") + p("M1 11q7 5 13 1l-3-1", "#0a6a70"),
  ring: `<circle cx="8" cy="8" r="5.500" fill="none" stroke="#333" stroke-width="3.500" stroke-dasharray="3 2.800"/>`,
  slabc: p("M1 12l3-7h11l-3 7z", "#58788e", "#8fb2c8") + p("M2 15L15 1"),
  cols: p("M1 2h5v12H1zM1 5h3M1 8h3M1 11h3", "#24435a", "#8fb0c4") + p("M8 2h7v2l-2 2v5l2 2v2H8v-2l2-2V6L8 4z", "#333", "#ddd"),
  zd: `<text x="0" y="12" font-size="15" font-family="Liberation Sans" fill="#e01b24">Z</text>` + t(9, 14, 9, "d", "#e01b24"),
  cutl: p("M0 8h16v4H0z", "#7aa0bb", "#a9c6da") + p("M1 14L15 2M0 8h16"),
  corn: p("M3 3h12v4H7v8H3z", "#333", "#ddd") + p("M4 1a3 3 0 1 1 0 6 3 3 0 0 1 0-6", "#7a5fb0"),
  balls: p("M1 2h5v8H1z", "#123", "#3e6a88") + p("M9 2h5v8H9z", "#332", "#d8d0a0") + `<circle cx="9" cy="12" r="3" fill="#c33"/><circle cx="13" cy="13" r="2" fill="#a90"/>`,
  calc: p("M1 1h12v7H1z", "#111", "#ccc", 1.500) + p("M5 5h10v10H5z", "#064a52", "#2a9aa0") + p("M7 7h6M7 10h1M10 10h1M13 10h1M7 13h1M10 13h1", "#fff"),
  redbox: p("M2 5h11v7H2z", "#333", "#111", 2) + p("M10 .500h5.500V6M.500 10v5.500H6", red, "none", 1.300),
  binoc: p("M2 4h3v4l1 6H1V8zM10 4h3v4l2 6h-5zM6 7h3", "#111", "#111") + p("M3 10v3M12 10v3", "#fff"),
  gridw: p("M.500 1.500h15v12H.500zM8 1v13M0 7.500h16M4 1v6M12 1v6", "#aaa", "#fff"),
  gridb: p("M.500 1.500h15v12H.500zM10 1v13M0 7.500h16", "#aaa", "#fff") + p("M3 7v4H1v4h7v-4H6V7z", navy, navy),
  nodes: p("M1 3h4v3H1zM11 3h4v3h-4zM1 11h4v3H1zM5 4h6M3 6v5M13 6v5") + p("M3 0v2M13 0v2M0 4h1M8 7v2M3 14v2", "#d14", "none", 1.500),
  fr: p("M1.500 2.500h13v10h-13zM5 2v10M8 2v10M11 2v10"),
  cold: p("M3 2v12M8 2v12", gray, "#ccc", 2) + p("M0 1.500h10M0 14.500h10", "#d14", "none", 1.500),
  span: p("M1 2.500h14v8l-4-3-3 2-3-2-4 3zM4 5h8"),
  brick: p("M1.500 2.500h6v3h7v7h-13zM1 5.500h6M1 9h13M4 2v3M8 9v3"),
  tile: p("M1.500 2.500h6v3h7v7h-13zM1 5.500h7M1 9h13M4.500 2v10M8 5v7M11.500 5v7"),
  ret: p("M5.500 2.500h3v4l3 5h3v3h-13v-3h4z", "#2b4a70", "#dfe9f2"),
  ell: p("M9 1.500h4v12H2v-4h7z", "#2b4a70", "#cfdde8"),
  zig: p("M1 13h4V9h4V5h5V2M2 4l12 8", "#222", "none", 1.300),
  comb: p("M1 2.500h14M1 4.500h14M2.500 4v11M5.500 4v9M8.500 4v9M11.500 4v9M14.500 4v11"),
  dome2: p("M1 12a7 8 0 0 1 14 0zM5 12V6M8 12V4M11 12V6M2 9h12"),
  obj: p("M3 1h9l2 3v4H1l3-4", "#111", "#fff") + p("M0 9h16v7H0z", "#111", "#222") + t(1, 15, 7, "OBJ", "#d8d000"),
  wallp: p("M1 1h5v14H1z", "#777", "#b5d6bb") + p("M8.500 6.500h4l3 3v6h-7z", "#234", "#cfe2f5"),
  para: p("M5 1h8l-3 10H1z", "#222") + t(3, 14, 7, "123", navy),
  chess: p("M1 3h5v4h9v6H1z", "#111", "#fff") + p("M1 5h14M1 9h14", "#111", "none", 2).replace("/>", ' stroke-dasharray="2 2"/>') + p("M3 7h12M3 11h12", "#111", "none", 2).replace("/>", ' stroke-dasharray="2 2"/>'),
  chessb: p("M1 1h14v14H1z", "#456", "#dfe9f0") + p("M1 3h4v4H1zM9 1h4v4H9zM5 7h4v4H5zM1 11h4v4H1zM11 8h4v5h-4z", "#3d6384", "#3d6384"),
  gridc: p("M3 1v14M7 1v14M11 1v5M0 4h14M0 8h6M0 12h6", steel) + p("M7 7h7v8H7z", "#123", "#2f5878"),
  beams: p("M1 8.500h14v3H1zM2 14l2-2 2 2zM10 14l2-2 2 2zM5 1v6M3 5l2 2 2-2M9 6V1h4M9 3h3"),
  beamg: p("M1 8.500h14v3H1z", "#333", "#ccc") + p("M5 1v6M3 5l2 2 2-2M9 6V1h4M9 3h3", gray),
  isec: p("M3 1.500h10v2l-2 2v5l2 2v2H3v-2l2-2v-5l-2-2zM7 5v7M9 5v7", "#222", "#fff"),
  cone: p("M2 5h12l-4 5v4H6v-4z", "#24435a", "#527f9c") + p("M12 1l3 3", gray),
  plank: p("M2 8l11-6v5L2 13z", "#111", "#fff", 1.500),
  step: p("M7 2h8v6H7zM3 8h4v6H1v-3h2z", "#333", "#fff"),
  curve: p("M1 13V6q3 3 6 0t8 0v6", "#1b2fd0", "none", 1.500) + p("M10 1h5v4M1 15h5", red, "none", 1.300),
  peaks: p("M3 14V8l3-5v11M6 14V5l5 9M11 14V5l2 3v6", "#222"),
  rail: p("M1 4h12l-2 2H1M1 8h12q2 3-2 4H1"),
  winb: p("M1 2h14v12H1z", gray) + p("M3 4h10v8H3z", "#111", "#111") + p("M6 4v8M10 4v8M3 8h10", "#eee"),
  comps: p("M1 3h8M3 3v4M7 3v4", "#222") + p("M5 8h9M3 11h10M8 14l6-8", "#a07800", "none", 1.500),
  spec: p("M1.500 1v13.500H16", "#666") + p("M2 12l3-8 3 4 7 5", "#2a8a4a", "none", 1.500) + p("M3 12l3-5 4 4", red),
  ibeam: p("M1 2v12M4 2v12M6 3h9M8 3v3l2 2v2M14 3v3l-2 2v2", "#222", "none", 1.300) + p("M6 11h8l-3 4H6z", "#776800", "#e5d81c"),
  web: p("M8 1v14M1 8h14M3 3l10 10M13 3L3 13M2 4l6-2 6 2v8l-6 2-6-2z", "#222"),
  bars3: p("M4 1v14M8 1v14M12 1v14", "#111", "none", 2) + p("M1 5h14M1 11h14", "#666", "none", 1.500),
  gusset: p("M1 2h14v12H1zM1 2l5 4M15 2l-5 4M1 14l5-4M15 14l-5-4", "#555") + p("M5 5h6v6H5z", "#222", "#aaa"),
  zigz: p("M1 4h14M1 12l3-7 4 7 4-7 3 7", "#333"),
  ysq: p("M2 2v12M4 2v12", "#555") + p("M7 4h8v8H7z", gold, "none", 1.500),
  hole: p("M0 3h16M0 12h8", "#8a6500", "none", 1.500) + p("M8 4a3 3 0 1 1 0 6 3 3 0 0 1 0-6", "#a80"),
  hatch2: p("M1 2h9v8H1zM6 6h9v8H6zM1 8l6-6M3 10l7-7M8 14l7-7M6 12l6-6", "#444", "none", 1.200),
  gun: p("M2 4h7v7H2z", "#333", "#eee") + p("M9 7h6v8h-3V8", "#111", "#111") + p("M5 12h4", gold, "none", 2),
  slabs: p("M.500 1.500h7v4h5v5H.500zM4 10v4l3 0", navy, "#fff"),
  rafts: p("M.500 2.500h12v8H.500zM4 11v3h3", navy, "#fff"),
  cube: p("M1 5l6-4 6 3v8l-6 3-6-3z", "#222", "#777") + p("M1 5l6 3 6-4M7 8v7", "#111"),
  wallg: p("M1 6l9-4v8l-9 3z", "#444", "#bbb") + p("M1 9l9-4", "#555"),
  dyns: p("M0 2h5M0 7h5M0 12h5", "#f00", "none", 2) + p("M7 3h7v4H7zM7 7v5", "#888", "#ddd"),
  flr: p("M0 6h6", "#f00", "none", 2) + p("M7 3h7v4H7zM7 7v5", "#888", "#ddd"),
  isos: p("M4 12V2h9v5M1 7h6v7H1zM6 2v8M8 2v5M10 2v5", "#333", "#999"),
  axes: p("M2 15V2M0 4l2-3 2 3M2 14.500h6M2 12q4-8 10-7"),
  rule: p("M.500 1.500h15v4H.500zM4 2v2M8 2v2M12 2v2M3 8v3h4"),
  joint2: p("M0 2h8v12H0zM8 6h7v4H8z", "#333", "#88909a") + p("M9 1h6v4H9zM9 12h5", gold, "#e8d820"),
  nuts: p("M6 1a5 5 0 1 1 0 10A5 5 0 0 1 6 1M6 4a2 2 0 1 1 0 4 2 2 0 0 1 0-4", "#444", "#aaa"),
  peakb: p("M3 14V6l4-5v13M7 14V6l6 8", "#345", "#8da5b8"),
  sbm: p("M0 3h15l-3 3H0zM0 8h14v4H0z", "#345", "#8da5b8"),
  redbars: p("M0 3h14M0 12h14", gray, "none", 2) + p("M4 0v15M9 0v15", "#8a1515", "none", 3),
  blubars: p("M0 3h14M0 12h14", gray, "none", 2) + p("M4 0v15M9 0v15", "#8fb8d4", "none", 3),
  // tree
  modal: p("M4 0l5 4-4 4 4 3-4 3", "#223", "none", 1.300) + p("M1 15h9", "#a11", "none", 1.500) + p("M13.500 9v5M11 11.500h5", red),
  folder: p("M.500 3.500l2-2h4l1 2h7v10H.500z", "#8a7a00", "#f5e58a"),
  fspec: p("M.500 3.500l2-2h4l1 2h7v10H.500z", "#5a5000", "#f5e58a") + p("M2.500 12V6M3 9q4-5 10 2", "#223aa0", "none", 1.300),
  ftime: p("M.500 3.500l2-2h4l1 2h7v10H.500z", "#5a5000", "#f5e58a") + p("M2 12V6M3 9l2-3 2 5 2-5 2 5 2-4", "#223aa0"),
  fpush: p("M.500 3.500l2-2h4l1 2h7v10H.500z", "#5a2000", "#f5d070") + p("M0 3.500h8", "#f20", "none", 3) + p("M8 0l4 3.500L8 7z", "#f20", "#f20") + p("M4 9h8v5H4z", "#a22", "#fa4"),
  feul: p("M.500 3.500l2-2h4l1 2h7v10H.500z", "#5a5000", "#f5e58a") + p("M7 1l-1 4 3 4-3 4h5", "#113", "none", 1.500),
  fload: p("M.500 3.500l2-2h4l1 2h7v10H.500z", "#5a5000", "#f5e58a") + p("M3 6v5M11 8h4", "#22c") + p("M5 8h4M7 6v4", "#c22"),
  tsr: p("M2.500 3v11.500H16M1 5l1.500-2L4 5") + p("M3 11q4-9 8-1l3 3", "#a11") + p("M13 0v5M10.500 2.500h5", "#e03"),
  tsr1: p("M2.500 3v11.500H16M1 5l1.500-2L4 5") + p("M3 11q4-9 8-1l3 3", "#a11", "none", 1.300),
  tsb: p("M2.500 3v11.500H16M1 5l1.500-2L4 5") + p("M3 11q4-9 8-1l3 3", "#22c") + p("M13 0v5M10.500 2.500h5", "#e03"),
  ttr: p("M1.500 3v11.500H16") + t(3, 12, 8, "f(t)", "#e03") + p("M13 0v4M11 2h5", "#e03"),
  ttb: p("M1.500 3v11.500H16") + p("M3 12l2-5 3 5 2-5 3 5 2-5", "#22c") + p("M13 0v4M11 2h5", "#e03"),
  lay: p("M6 4h8l-3 3H3zM3 9l8 0 3-3M3 11h8l3-3M2 13h8l3-3", "#111", "#ccc"),
  page: p("M2.500 1.500h8l3 3v9h-11z", "#333", "#fff") + p("M13.500 4v10H3M10 1.500V5h3", "#111", "none", 1.500),
  page2: p("M4 3h6l3 2v8H4z", "#222", "#fff", 1.800),
  plan: p("M1.500 1.500h13v13h-13z", "#111", "#fff") + p("M3 8h7", "#111", "none", 3) + p("M11 1v14M2.500 1v14M4.500 1v14", "#333") + p("M13 3v2M13 12v2", red)
};

// 32px ribbon icons
const fArrow = p("M14 3v12M10 10l4 5 4-5", "#777", "none", 1.500) + p("M20 14V4h7M20 9h6", "#999", "none", 2);
const frameGray = p("M12 31V16l5-12h14l-4 12v6M12 16h15M22 4l-5 12M18 16v8M14 11h15", "#999", "none", 1.300);
const big = {
  doc: p("M14.700 15.700h9l7 6.500v9.100h-16z", "#111", "#fff", 1.400) + p("M23.700 15.700v6.500h7M18 23h4M18 27h9", "#111", "none", 1.400),
  select: p("M3 1h10l5 5v10H3z", "#333", "#fff", 1.200) + p("M7 9h10l5 5v10H7z", "#e33", "#fff", 1.300) + p("M12 17h9l6 6v8H12z", "#222", "#fff", 1.300) + p("M15 24h4M15 28h9M6 8h4M10 16h4"),
  check: p("M4 1h24v30H4z", "#3b4a7a", "#fff", 1.200) + p("M8 9l3 3 6-7M18 10h7M8 17h9M8 22h7M8 27h6", "#34509a", "none", 1.300),
  slab: p("M2 1h14v9h11v12H2z", "#3b5580", "#fff", 1.300) + `<text x="5" y="30" font-size="10" fill="#333">4</text>`,
  raft: p("M1 4h26v16H1z", "#3b5580", "#fff", 1.300) + `<text x="5" y="30" font-size="10" fill="#333">4</text>`,
  beam: fArrow + p("M1 17h30v5H1z", "#333", "#bbb", 1.400) + p("M1 29l5-6 5 6z", "#333", "#666"),
  column: p("M2 1h26v4l-5 5v12l5 5v4H2v-4l5-5V10L2 5z", "#333", "#bbb", 1.300) + p("M10 2v28M13 2v28M16 2v28M19 2v28", "#777"),
  wall: p("M3 14L26 1v14L3 31z", "#222", "#ccc", 1.400) + p("M3 19L26 6M3 24l23-14M3 28l23-14", "#555"),
  walls: p("M2 9l13-8 2 3-7 5 4 3L26 3l4 3v14L14 31 2 26z", "#222", "#ccc", 1.400) + p("M2 9l12 6L30 6M14 15v16M2 14l12 6 16-9M2 20l12 6 14-9", "#444"),
  strip: p("M5 1h7v10l5 4v2M5 1v10l-4 5v5h14", "#999", "#eee", 1.400) + p("M0 17h20v5H0z", "#444", "#bbb", 1.400) + p("M19 3v12M15 11l4 5 4-5M25 12V3h7M25 7h6", "#777", "none", 1.500) + p("M1 30l5-7 5 7z", "#333", "#555"),
  retain: p("M7 3h6l9 19h8v5H3v-5h4z", "#4d7590", "#e8eff4", 1.400) + p("M13 3v19H7", "#4d7590"),
  well: p("M18 1h9v30h-9z", "#3f6888", "#dfe9f0", 1.400) + p("M18 2v19", "#3f6888", "none", 2) + p("M1 20h17v11H1z", "#3f6888", "#e4edf3", 1.400),
  geo: `<defs><linearGradient id="rb"><stop offset="0" stop-color="#f00"/><stop offset=".25" stop-color="#fd0"/><stop offset=".5" stop-color="#1a3"/><stop offset=".75" stop-color="#06a"/><stop offset="1" stop-color="#228"/></linearGradient></defs><path d="M0 20h32v12H0z" fill="url(#rb)"/>` + p("M11 2h10M13 2v8M19 2v8M13 8H4v9M19 8h9v9M7 17v-5h18v5M2 14l2 3 2-3M26 14l2 3 2-3", "#111", "none", 1.300),
  dyn: frameGray + p("M0 3h8M0 13h8M0 23h8", "#f00", "none", 1.500) + p("M6 0l5 3-5 3zM6 10l5 3-5 3zM6 20l5 3-5 3z", "#f00", "#f00"),
  floor: frameGray + p("M0 12h8", "#f00", "none", 1.500) + p("M6 9l5 3-5 3z", "#f00", "#f00"),
  iso: p("M5 22V9q0-8 10-8t9 8v10M9 22V4M13 22V1M17 20V1M21 18V3", "#333", "none", 1.400) + p("M1 22h14v9H1zM5 22v9M10 22v9", "#333", "#fff", 1.300),
  push: p("M3 27V2M0 6l3-5 3 5M3 27L14 16M3 27h12", "#222", "none", 1.400) + p("M5 25Q14 8 27 12", "#e66", "none", 1.300) + p("M14 16Q22 8 28 12l2 6", "#555"),
  scol: p("M1 31V10l8-9v30M9 1l10 13 9-6v12l-13 12H1", "#4a6478", "#a5a8b5", 1.200) + p("M9 10v21", "#4a6478"),
  sbeam: p("M1 1h30L17 16H1z", "#6a7a8a", "#a5a8b5", 1.200) + p("M1 19h20M1 31h20V19z", "#557", "#a5a8b5", 1.200),
  tali: p("M0 5h32M0 17h32M0 28h32", "#9098a5", "none", 3) + p("M6 0v32M15 0v32M25 0v32", "#8a1515", "none", 4),
  asik: p("M0 5h32M0 17h32M0 28h32", "#9098a5", "none", 3) + p("M6 0v32M15 0v32M25 0v32", "#9cc4e0", "none", 4),
  truss: p("M0 6h32M0 6l8 14 8-14 8 14 8-14M4 20h24M2 8v3", "#5a7890", "none", 1.300),
  brace: p("M1 1h30v5H1zM1 6h5v26H1zM27 6h4v20h-4z", "#4a7898", "#9cc4e0", 1.200) + p("M6 6l20 22M26 6L8 32", "#b55"),
  ebrace: p("M1 1h30v5H1zM1 6h5v26H1zM27 6h4v20h-4z", "#4a7898", "#dfeaf2", 1.200),
  crane: p("M2 0h8v32H2z", "#444", "#888") + p("M10 20h20v6H10z", "#a08a00", "#ffe12b") + p("M12 7h16M20 7v14M16 7v2M24 7v2", "#444", "none", 1.600),
  comp: p("M0 2h26M7 2v8M15 2v8", "#333", "none", 1.400) + p("M0 12h20l4 0M6 18h12M0 26h16", "#e6c800", "none", 2) + p("M0 10h20L30 1M20 14l-8 8H0", "#444", "none", 1.200),
  comb: p("M0 1h32M0 25h18", "#eed400", "none", 2) + p("M17 7a4 4 0 1 1 0 9 4 4 0 0 1 0-9M0 20h32", "#444", "none", 1.400),
  ccomb: p("M12 1h19v10M2 28h16M0 9h32", "#eed400", "none", 2) + p("M0 6h29M11 2h6M14 2v4M19 2h6M22 2v4M15 13a4 4 0 1 1 0 9 4 4 0 0 1 0-9", "#444", "none", 1.400),
  joint: p("M1 0h9v32H1z", "#555", "#888") + p("M10 7h22v8H10z", "#556", "#9098a5") + p("M11 11h10v14H11z", "#a08a00", "#ffd83a") + p("M16 13v2M16 17v2", "#a33", "none", 2),
  props: p("M3 1v5M6 1v5M3 6v12M6 6v12M2 18h5v13H2zM14 1v17M18 1v17M13 18h6v13h-6zM26 1v5M29 1v5M26 6v12M29 6v12M25 18h5v13h-5zM13 18L8 31M19 18l5 13M16 20v10M2 6h5M13 6h6M25 6h5", "#111", "none", 1.300),
  meter: p("M1 1h30v11H1zM5 2v5M9 2v5M13 2v5M17 2v5M21 2v5M25 2v5", "#666", "none", 1.300) + `<text x="3" y="27" font-size="12" fill="#333">4</text>`,
  nut: p("M11 1a10 10 0 1 1 0 20A10 10 0 0 1 11 1", "#444", "#888", 1.500) + p("M11 5a6 6 0 1 1 0 12 6 6 0 0 1 0-12", "#444", "#bbb", 1.500)
};

function draw(svg, name, set, size) {
  svg.setAttribute("viewBox", `0 0 ${size} ${size}`);
  svg.innerHTML = name.split("+").map(n => set[n]).join("");
}

document.querySelectorAll("[data-tools]").forEach(bar => {
  bar.dataset.tools.split(" ").forEach(name => {
    if (name === "|") {
      bar.insertAdjacentHTML("beforeend", `<span class="sep"></span>`);
    } else if (name === "v") {
      bar.insertAdjacentHTML("beforeend", `<button class="drop" aria-label="Menü"><span class="caret"></span></button>`);
    } else if (name === "<") {
      bar.insertAdjacentHTML("beforeend", `<button class="drop" aria-label="Daha fazla">◂</button>`);
    } else {
      const icon = name.replace("*", "");
      const boxed = icon === name ? "" : " boxed";
      bar.insertAdjacentHTML("beforeend", `<button class="tool${boxed}" aria-label="${icon}"><svg data-icon="${icon}"></svg></button>`);
    }
  });
});

const plan = n => ["plan", n];
const tree = [
  ["", "", [
    ["", "", [
      ["", "", [
        ["modal", "Modal Analiz", [["modal", "Modal"], ["modal", "Modal'"]]]
      ]],
      ["fspec", "Tasarım Spektrumu Analizi", [
        ["tsr", "Tasarım Spektrumu", [["tsr1", "DSF1"]]],
        ["tsb", "Tasarım Spektrumu Durumları", [["tsb", "Ex"], ["tsb", "Ey"], ["tsb", "Ex'"], ["tsb", "Ey'"]]]
      ]],
      ["ftime", "Zaman Tanım Alanı Analizi", [["ttr", "Zaman Tanım Alanı Fonksiyonları"], ["ttb", "Zaman Tanım Alanı Durumları"]]],
      ["fpush", "Nonlineer İtme Analizi"],
      ["feul", "Euler Burkulma Analizi"],
      ["fload", "Yükleme Kombinasyonları", "plus"]
    ]],
    ["lay", "Çizimler", [
      ["page", "ÇATI"],
      ["page", "4. KAT", [plan("4. KAT Kalıp Planı")]],
      ["page", "3. KAT", [plan("3. KAT Kalıp Planı")]],
      ["page", "2. KAT"],
      ["page", "1. KAT", [plan("Kesit 1 / 1-1 KESİTİ")]],
      ["page", "ASMA KAT", [plan("ASMA KAT Kalıp Planı")]],
      ["page", "ZEMİN KAT", [plan("ZEMİN KAT Kalıp Planı"), plan("ZEMİN KAT Kalıp Planı (1)"), plan("ZEMİN KAT Temel Apl. Planı")]],
      ["lay", "Betonarme Çizimleri"],
      ["lay", "Çelik Çizimleri"],
      ["lay", "Diğer Çizimler", [plan("2D")]]
    ]]
  ]],
  ["folder", "Sonuç", [
    ["page2", "Proje Hataları"],
    ["page2", "Yapı Özet Bilgileri"],
    ["page2", "Açıklama Bilgileri", "plus"],
    ["page2", "Yapı Kat ve Yük Bilgileri", "plus"]
  ]]
];

function branch(items) {
  return "<ul>" + items.map(([icon, text, kids]) => {
    const twist = kids ? `<button class="twist ${kids === "plus" ? "plus" : ""}" aria-label="Aç/kapat"></button>` : "";
    const row = text ? `<div class="row">${twist}<svg data-icon="${icon}"></svg>${text}</div>` : "";
    return `<li>${row}${Array.isArray(kids) ? branch(kids) : ""}</li>`;
  }).join("") + "</ul>";
}
document.getElementById("tree").innerHTML = branch(tree);

document.querySelectorAll("svg[data-icon]").forEach(s => draw(s, s.dataset.icon, small, 16));
document.querySelectorAll("svg[data-big]").forEach(s => draw(s, s.dataset.big, big, 32));

// floor plan
const line = (pts, s, w = 3, extra = "") => `<path d="${pts}" fill="none" stroke="${s}" stroke-width="${w}" ${extra}/>`;
const rect = (x, y, w, h, f) => `<rect x="${x}" y="${y}" width="${w}" height="${h}" fill="${f}"/>`;
let out = "";
const dash = 'stroke-dasharray="14 4 3 4 3 4"';
[178, 231, 384, 471, 582, 790].forEach(y => {
  out += line(`M80 ${y}h72M520 ${y}h78`, "#0ff");
});
[159, 169, 259, 292, 313, 515, 526].forEach(x => out += line(`M${x} 110v70`, "#0ff"));
[151, 172, 259, 292, 313, 493, 511].forEach(x => out += line(`M${x} 790v68`, "#0ff"));
[[170, 186, 144, 198], [322, 238, 188, 148], [322, 395, 182, 180], [260, 395, 54, 180]].forEach(r => out += rect(...r, "#2f2029"));
out += line("M214 188v196M379 238v146M376 396v178M274 486v88", "#168016");
out += line("M170 286h142M323 301h186M323 484h182M260 430h54M260 523h54", "#168016", 9);
out += line("M239 188v196M418 238v146M418 396v178M286 396v178", "#2e2ea0", 9);
out += line("M172 326h142M324 341h184M324 520h180M172 326v8", "#2e2ea0");
out += line("M170 506h90M170 550h90M190 486v88", "#06f") + line("M200 486l14 88M224 486l-24 88M250 486l-60 60M172 560l88-60M172 526h40", "#00e", 3);
for (let x = 336; x < 466; x += 13) out += line(`M${x} 188v46`, "#00f");
out += line("M324 210h144", "#00f");
out += line("M259 188v600M292 188v600", "#0ff", 3, dash) + line("M170 232h144M323 471h184M169 590v150M172 640v150M499 675v110", "#0ff", 3, dash);
const walls = "M160 183H520M318 183V786M324 236H515M165 389H515M160 578H506M160 786H506M164 183V786M518 183L514 400 507 578V786M255 389V470H165M318 470H255";
out += line(walls, "#00f", 13) + line(walls, "#fff", 7);
out += line("M470 186v50M260 486v88M215 516h45M215 531h45M215 516v15", "#fff");
out += line("M160 156H533M165 369h108v112H165M262 789h54", "#f0f", 6);
out += line("M120 412H575", "#f0f", 3, 'stroke-dasharray="26 5 4 5"') + rect(117, 405, 8, 9, "#f0f") + rect(570, 405, 8, 9, "#f0f");
out += line("M109 411v12M583 411v12", "#ccc", 4);
[[160, 178, 10, 52], [304, 178, 26, 12], [164, 384, 94, 12], [312, 386, 12, 54], [312, 530, 12, 54], [160, 562, 10, 30], [154, 732, 11, 52], [304, 780, 24, 12], [502, 566, 12, 22], [502, 734, 12, 34], [514, 178, 12, 56], [506, 376, 14, 30]].forEach(([x, y, w, h]) => {
  out += `<rect x="${x}" y="${y}" width="${w}" height="${h}" fill="#b9a6c8" stroke="#f0f" stroke-width="3"/>`;
});
out += line("M151 52l38-2 72-4h99l120 3 58 3-6 108-6 170-8 130-4 320H154l4-300V120l-6-68", "#f00");
out += line("M518 400v206M151 686v50M523 240v120", "#aaa");
[[186, 207], [339, 258], [274, 412], [342, 412], [274, 492]].forEach(([x, y]) => {
  out += `<circle cx="${x}" cy="${y}" r="7" fill="none" stroke="#f00" stroke-width="3"/>` + line(`M${x - 10} ${y}h20`, "#f00") + line(`M${x + 10} ${y - 5}h32M${x + 12} ${y + 4}h30`, "#ccc", 5, 'stroke-dasharray="4 2"');
});
out += line("M201 378h38M198 459h38M304 540v18M145 746v16", "#fff", 6);
const bubble = (x, y) => `<circle cx="${x}" cy="${y}" r="6" fill="#2d0b07" stroke="#f00" stroke-width="3"/>` + rect(x - 2, y - 3, 5, 5, "#ccc");
[178, 231, 384, 471, 582, 789].forEach(y => out += bubble(72, y) + bubble(606, y));
[158, 168, 258, 291, 312, 513, 525].forEach(x => out += bubble(x, 99));
[150, 171, 258, 291, 312, 492, 511].forEach(x => out += bubble(x, 867));
[[151, 52], [298, 46], [538, 52], [157, 145], [157, 157], [160, 178], [529, 157], [526, 178], [313, 178], [160, 232], [313, 232], [157, 271], [157, 349], [163, 349], [163, 385], [259, 385], [274, 370], [313, 385], [517, 385], [526, 226], [526, 232], [523, 244], [523, 283], [520, 316], [520, 355], [313, 439], [160, 470], [160, 481], [274, 481], [313, 472], [514, 493], [313, 529], [157, 583], [259, 583], [313, 583], [511, 583], [154, 733], [511, 733], [151, 790], [160, 790], [265, 790], [313, 790], [511, 790]].forEach(([x, y]) => {
  out += `<rect x="${x - 12}" y="${y - 12}" width="24" height="24" fill="none" stroke="#0f0" stroke-width="3"/>`;
});
document.getElementById("plan").innerHTML = out;

// taskbar programs
const apps = [
  ["Başlat", `<path d="M0 0h11v11H0zM13 0h11v11H13zM0 13h11v11H0zM13 13h11v11H13z" fill="#35b8f5"/>`],
  ["Ara", `<circle cx="14" cy="9" r="8" fill="#444" stroke="#ddd" stroke-width="2"/><path d="M8 15l-7 8" stroke="#ddd" stroke-width="3"/>`],
  ["Görev görünümü", `<path d="M6 1h18v15H6z" fill="#eee"/><path d="M0 8h18v15H0z" fill="#777" opacity=".85"/>`],
  ["Sohbet", `<path d="M1 23l1-6A12 11 0 1 1 7 22z" fill="#6a63d0"/><path d="M5 8h9v9H5zM15 11l4-3v9l-4-3z" fill="#fff"/>`],
  ["Edge", `<circle cx="12" cy="12" r="12" fill="#1673c8"/><path d="M1 9C5-3 24-1 24 10c0 5-7 6-9 4 2-4-2-8-6-7-4 0-7 3-8 6z" fill="#3fd0a0"/><path d="M9 12c-2 6 4 11 12 8-6 7-16 4-17-4 0-3 2-5 5-4z" fill="#0b3f86"/>`],
  ["Store", `<path d="M0 5h24v17q0 2-2 2H2q-2 0-2-2z" fill="#f4f4f4"/><path d="M6 5V1h12v4" fill="none" stroke="#2aa5e8" stroke-width="2"/><path d="M7 10h4v4H7z" fill="#f25022"/><path d="M13 10h4v4h-4z" fill="#7fba00"/><path d="M7 15h4v4H7z" fill="#00a4ef"/><path d="M13 15h4v4h-4z" fill="#ffb900"/>`],
  ["Posta", `<path d="M0 10L12 2l12 8v14H0z" fill="#1478c8"/><path d="M2 9h20l-10 8z" fill="#f4f4f4"/><path d="M0 10l12 8 12-8v14H0z" fill="#2fa4e7"/>`, "", "99+"],
  ["Telefon", `<path d="M5 0h14v24H5z" fill="#29b6f6"/><path d="M5 0h14v5H5z" fill="#0f86c9"/><path d="M5 17h14v7H5z" fill="#0b57a4"/>`],
  ["Chrome", `<circle cx="12" cy="12" r="11" fill="#fbbc05"/><path d="M2 7a11 11 0 0 1 20 0H12l-5 7z" fill="#ea4335"/><path d="M2 7l6 9 4 1-3 6A11 11 0 0 1 2 7z" fill="#34a853"/><circle cx="12" cy="12" r="5" fill="#4285f4" stroke="#fff" stroke-width="1.500"/>`, "open"],
  ["Dosya Gezgini", `<path d="M0 2h9l2 3H0z" fill="#d99a1c"/><path d="M0 5h24v18H0z" fill="#ffcf48"/><path d="M4 16h16v7H4z" fill="#1c7cc4"/>`, "open"],
  ["Belgeler", `<path d="M0 1h24v13l-9 9H0z" fill="#f4f4f4"/><path d="M4 12h12M4 16h9" stroke="#bbb"/><path d="M24 14q-6 0-5 4-5 0-4 5" fill="#999" stroke="#333"/><text x="4" y="8" font-size="6" font-weight="bold" fill="#d22">DOC1</text>`],
  ["Office", `<path d="M3 6l11-6 7 2v20l-7 2-11-4 11 1V5L7 7v10l-4 2z" fill="#e2401c"/>`],
  ["WhatsApp", `<circle cx="12" cy="12" r="11" fill="#25d366" stroke="#fff" stroke-width="2"/><path d="M1 23l2-6 4 4z" fill="#fff"/><path d="M8 6c-3 3 1 11 8 11l2-3-3-2-2 1-3-3 1-2z" fill="#fff"/>`, "open"],
  ["ideCAD", `<path d="M2 2h5v6H2z" fill="#e22"/><path d="M2 9h5v14H2zM9 2h5v21H9zM16 2h6v6h-6zM16 9h6v6h-6zM16 16h6v7h-6z" fill="#fff"/>`, "open current"]
];
document.getElementById("apps").innerHTML = apps.map(([name, art, state = "", badge]) =>
  `<button class="app ${state}" aria-label="${name}"><svg viewBox="0 0 24 24">${art}</svg>${badge ? `<span class="badge">${badge}</span>` : ""}</button>`
).join("");
```
